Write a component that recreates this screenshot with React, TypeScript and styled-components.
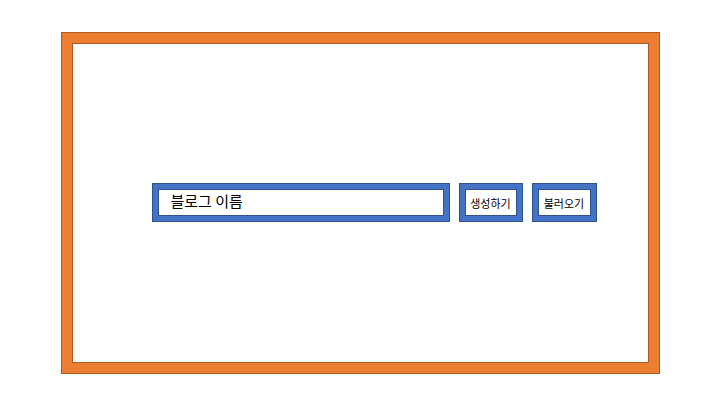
import React from "react";
import styled, { createGlobalStyle } from "styled-components";

const Global = createGlobalStyle`
  html, body { margin: 0; padding: 0; background: #ffffff; }
  body { font-family: "Noto Sans CJK KR", "Noto Sans", sans-serif; }
  * { box-sizing: border-box; }
`;

const Page = styled.div`
  width: 720px;
  height: 405px;
  display: flex;
  align-items: center;
  justify-content: center;
  background: #ffffff;
`;

const Frame = styled.div`
  width: 599px;
  height: 342px;
  background: #ed7d31;
  border: 1px solid #ae5a21;
  padding: 10px;
  display: flex;
`;

const Canvas = styled.div`
  flex: 1;
  background: #ffffff;
  border: 1px solid #ae5a21;
  display: flex;
  align-items: center;
  padding-left: 79px;
  padding-bottom: 1px;
`;

const Row = styled.div`
  display: flex;
  align-items: stretch;
  gap: 9px;
  height: 39px;
`;

const BlueBox = styled.div<{ $w: number }>`
  width: ${(p) => p.$w}px;
  height: 39px;
  border: 1px solid #2f528f;
  box-shadow: inset 0 0 0 5px #4472c4, inset 0 0 0 6px #2f528f;
  background: #ffffff;
  display: flex;
  align-items: center;
  color: #000000;
`;

const NameField = styled(BlueBox)`
  padding-left: 18px;
  font-size: 15px;
  padding-bottom: 3px;
`;

const ActionButton = styled(BlueBox)`
  justify-content: center;
  font-size: 11px;
  padding-top: 1px;
`;

export default function App() {
  return (
    <>
      <Global />
      <Page>
        <Frame>
          <Canvas>
            <Row>
              <NameField $w={298}>블로그 이름</NameField>
              <ActionButton $w={64}>생성하기</ActionButton>
              <ActionButton $w={65}>불러오기</ActionButton>
            </Row>
          </Canvas>
        </Frame>
      </Page>
    </>
  );
}
